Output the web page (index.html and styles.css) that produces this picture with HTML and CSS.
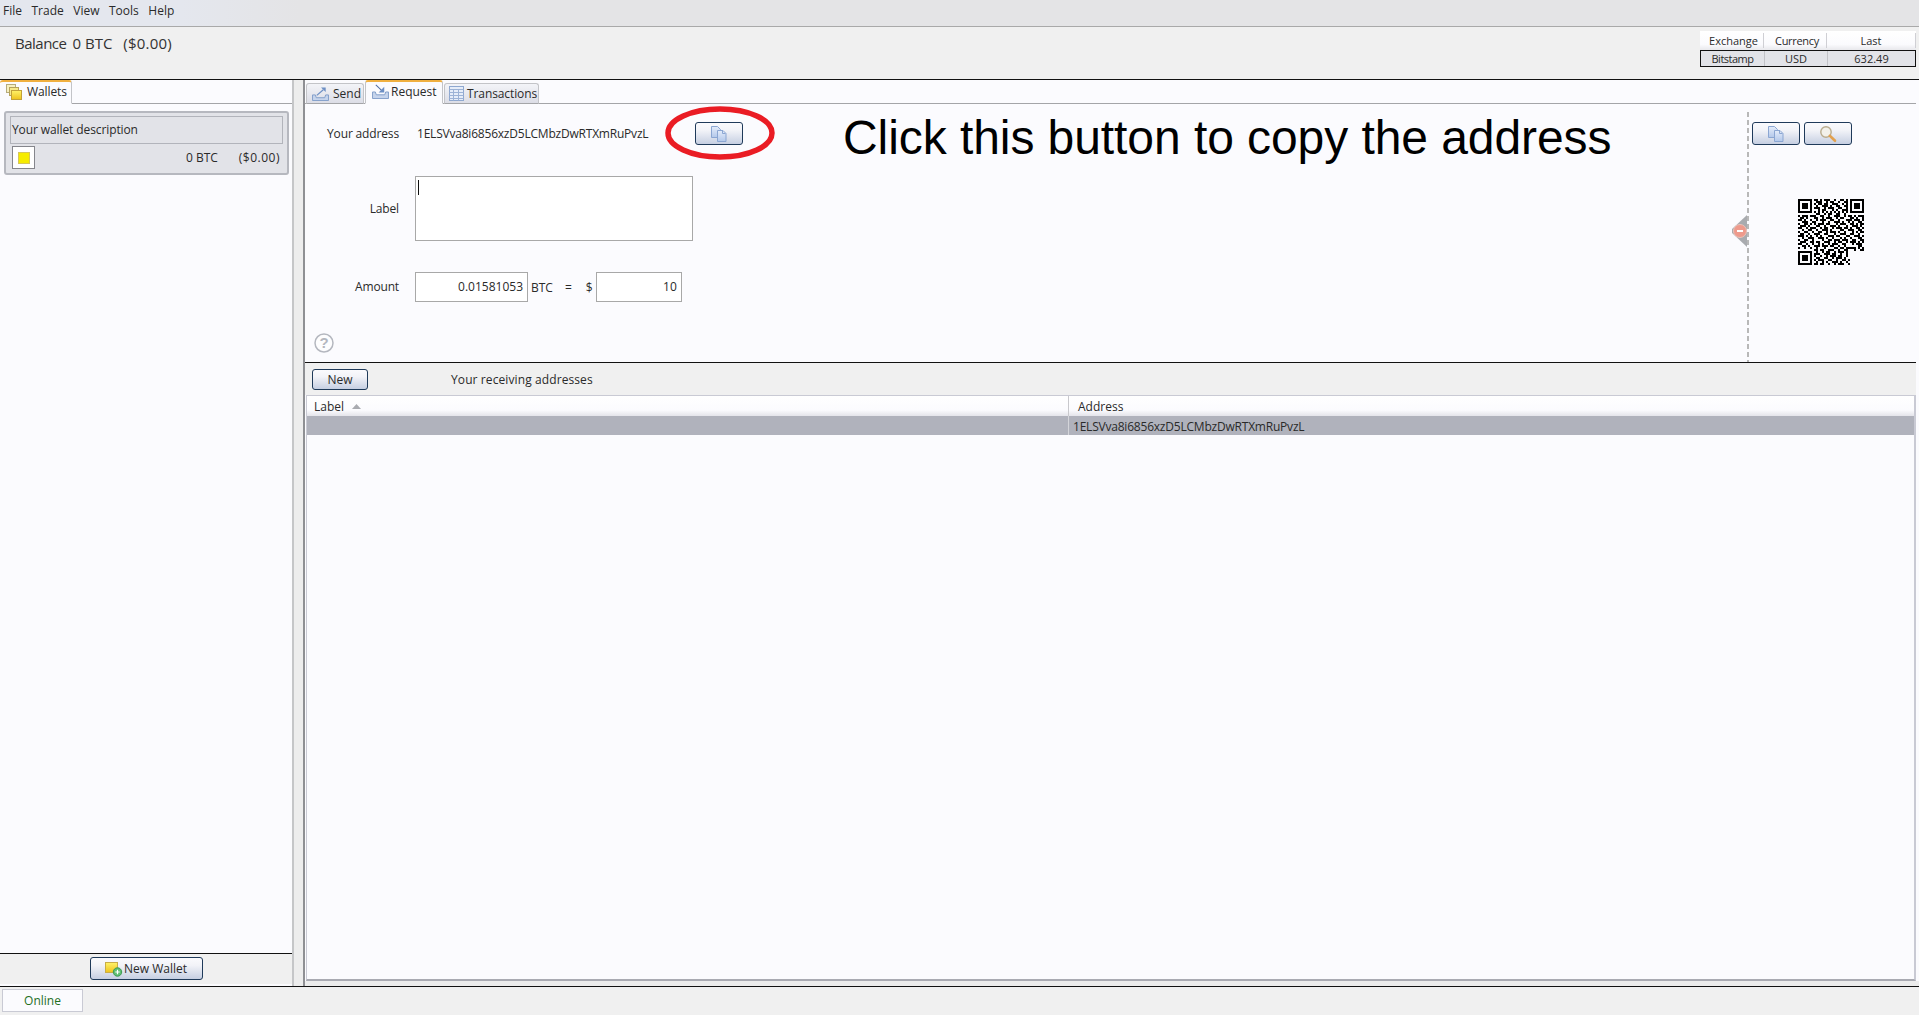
FILE: index.html
```html
<!DOCTYPE html>
<html lang="en">
<head>
<meta charset="utf-8">
<title>MultiBit</title>
<link rel="stylesheet" href="styles.css">
</head>
<body>
<svg class="defs" width="0" height="0" aria-hidden="true">
  <defs>
    <linearGradient id="docg" x1="0" y1="0" x2="0" y2="1"><stop offset="0" stop-color="#e4ecfa"/><stop offset="1" stop-color="#b3c8ea"/></linearGradient>
    <linearGradient id="yel" x1="0" y1="0" x2="0" y2="1"><stop offset="0" stop-color="#fff36a"/><stop offset="1" stop-color="#eec21c"/></linearGradient>
    <symbol id="i-copy" viewBox="0 0 18 18">
      <path d="M1.5 1.5h6l3 3v8h-9z" fill="url(#docg)" stroke="#8ba6d2"/>
      <path d="M7.5 5.5h5.500l3 3v8h-8.500z" fill="url(#docg)" stroke="#8ba6d2"/>
      <path d="M12.500 5.500v3h3" fill="none" stroke="#8ba6d2"/>
    </symbol>
    <symbol id="i-search" viewBox="0 0 18 18">
      <circle cx="7" cy="7" r="5.200" fill="#f3f1ea" stroke="#b9ac8e" stroke-width="1.400"/>
      <path d="M10.800 10.800l5.200 5" stroke="#e2a14f" stroke-width="2.600" stroke-linecap="round"/>
    </symbol>
    <symbol id="i-send" viewBox="0 0 18 16">
      <path d="M.5 9.500h3l1 3h9l1-3h3v6h-17z" fill="#c6d4ec" stroke="#7f9cc9"/>
      <path d="M5 10l7-6" stroke="#6d8fc4" stroke-width="1.300" fill="none"/>
      <path d="M9.500 1.500h5v5z" fill="#6d8fc4"/>
    </symbol>
    <symbol id="i-request" viewBox="0 0 18 16">
      <path d="M.5 8.500h3l1 3h9l1-3h3v7h-17z" fill="#c6d4ec" stroke="#7f9cc9"/>
      <path d="M4 1l7 6.500" stroke="#4f6da3" stroke-width="1.100" fill="none"/>
      <path d="M13 3v6h-6z" fill="#6d8fc4"/>
    </symbol>
    <symbol id="i-table" viewBox="0 0 15 15">
      <rect x=".5" y=".5" width="14" height="14" fill="#e6edf9" stroke="#8fa8d0"/>
      <path d="M.5 3.500h14M.5 6.500h14M.5 9.500h14M.5 12.500h14M4.500 3.500v11M9.500 3.500v11" stroke="#9db3d6" fill="none"/>
    </symbol>
    <symbol id="i-wallets" viewBox="0 0 16 16">
      <rect x=".5" y=".5" width="9" height="8" fill="#f6f0c0" stroke="#b6ab7c"/>
      <rect x="3.500" y="3.500" width="9" height="8" fill="#f7e98a" stroke="#b6a35c"/>
      <rect x="5.500" y="6.500" width="10" height="9" fill="url(#yel)" stroke="#c2a23a"/>
    </symbol>
    <symbol id="i-newwallet" viewBox="0 0 18 16">
      <rect x=".5" y="1.500" width="12" height="10" fill="url(#yel)" stroke="#c9ad47"/>
      <circle cx="12.500" cy="11" r="4.200" fill="#5fbf72" stroke="#3c9a52"/>
      <path d="M10.300 11h4.400M12.500 8.800v4.400" stroke="#fff" stroke-width="1.200"/>
    </symbol>
  </defs>
</svg>

<nav class="menubar">
  <span class="menu-item">File</span>
  <span class="menu-item">Trade</span>
  <span class="menu-item">View</span>
  <span class="menu-item">Tools</span>
  <span class="menu-item">Help</span>
</nav>

<header class="header">
  <div class="balance"><span class="balance-label">Balance</span><span>0 BTC</span><span class="balance-fiat">($0.00)</span></div>
  <div class="ticker">
    <div class="ticker-head"><span class="c1">Exchange</span><span class="c2">Currency</span><span class="c3">Last</span></div>
    <div class="ticker-row"><span class="c1">Bitstamp</span><span class="c2">USD</span><span class="c3">632.49</span></div>
  </div>
</header>

<main class="main">
  <aside class="left">
    <div class="tabstrip left-strip">
      <div class="tab active wallets-tab"><svg class="ico16"><use href="#i-wallets"/></svg><span>Wallets</span></div>
    </div>
    <div class="left-body">
      <div class="wallet-card">
        <div class="wallet-desc">Your wallet description</div>
        <div class="wallet-line">
          <div class="wallet-swatch"><i></i></div>
          <span class="wallet-btc">0 BTC</span>
          <span class="wallet-fiat">($0.00)</span>
        </div>
      </div>
    </div>
    <div class="left-foot">
      <button class="btn new-wallet"><svg class="ico-nw"><use href="#i-newwallet"/></svg>New Wallet</button>
    </div>
  </aside>

  <div class="splitter"></div>

  <section class="right">
    <div class="tabstrip right-strip">
      <div class="tab send-tab"><svg class="ico-tray"><use href="#i-send"/></svg><span>Send</span></div>
      <div class="tab active request-tab"><svg class="ico-tray"><use href="#i-request"/></svg><span>Request</span></div>
      <div class="tab tx-tab"><svg class="ico-table"><use href="#i-table"/></svg><span>Transactions</span></div>
    </div>

    <div class="request-top">
      <div class="form">
        <label class="form-label">Your address</label>
        <div class="address-row">
          <span class="address">1ELSVva8i6856xzD5LCMbzDwRTXmRuPvzL</span>
          <button class="btn icon-btn copy-btn"><svg class="ico18"><use href="#i-copy"/></svg></button>
        </div>
        <label class="form-label">Label</label>
        <div class="textarea"><i class="caret"></i></div>
        <label class="form-label amount-label">Amount</label>
        <div class="amount-row">
          <div class="input btc-input">0.01581053</div>
          <span class="unit">BTC</span>
          <span class="eq">=</span>
          <span class="dollar">$</span>
          <div class="input usd-input">10</div>
        </div>
        <div class="help-cell">
          <svg class="help" viewBox="0 0 20 20"><circle cx="10" cy="10" r="9" fill="#fdfdfe" stroke="#b4b7bf" stroke-width="1.500"/><text x="10" y="15" text-anchor="middle" class="help-q">?</text></svg>
        </div>
      </div>
      <div class="qr-side">
        <svg class="pull" viewBox="0 0 16 32"><path d="M16 0v32L1 18v-4z" fill="#a9abaf"/><circle cx="9" cy="16" r="6.500" fill="#ee9a8c" stroke="#e9c3bb"/><path d="M6 16h6" stroke="#fff" stroke-width="2"/></svg>
        <div class="qr-buttons">
          <button class="btn icon-btn"><svg class="ico18"><use href="#i-copy"/></svg></button>
          <button class="btn icon-btn"><svg class="ico18"><use href="#i-search"/></svg></button>
        </div>
        <svg class="qr" viewBox="0 0 33 33" shape-rendering="crispEdges">
          <path fill-rule="evenodd" d="M0 0h7v7h-7zM1 1v5h5v-5zM2 2h3v3h-3zM26 0h7v7h-7zM27 1v5h5v-5zM28 2h3v3h-3zM0 26h7v7h-7zM1 27v5h5v-5zM2 28h3v3h-3z"/>
          <path class="qr-runs" d="M8 .5h2M11 .5h1M13 .5h3M18 .5h1M21 .5h2M24 .5h1M9 1.500h3M14 1.500h1M16 1.500h2M20 1.500h1M23 1.500h2M8 2.500h1M10 2.500h2M13 2.500h2M17 2.500h3M22 2.500h1M24 2.500h1M9 3.500h1M12 3.500h3M16 3.500h1M19 3.500h2M23 3.500h2M8 4.500h3M13 4.500h1M15 4.500h3M20 4.500h2M24 4.500h1M10 5.500h1M12 5.500h2M17 5.500h1M19 5.500h1M22 5.500h3M8 6.500h1M10 6.500h1M12 6.500h1M14 6.500h1M16 6.500h1M18 6.500h1M20 6.500h1M22 6.500h1M24 6.500h1M9 7.500h2M13 7.500h1M15 7.500h2M19 7.500h2M23 7.500h1M0 8.500h1M2 8.500h3M6 8.500h3M11 8.500h2M15 8.500h1M18 8.500h3M23 8.500h1M25 8.500h2M28 8.500h1M30 8.500h3M1 9.500h2M4 9.500h1M8 9.500h2M12 9.500h1M14 9.500h3M19 9.500h1M21 9.500h2M26 9.500h2M29 9.500h1M32 9.500h1M0 10.500h2M3 10.500h1M6 10.500h1M9 10.500h1M11 10.500h3M16 10.500h2M20 10.500h1M24 10.500h3M28 10.500h3M32 10.500h1M2 11.500h3M7 11.500h2M12 11.500h1M15 11.500h1M18 11.500h3M22 11.500h1M25 11.500h1M27 11.500h1M30 11.500h2M0 12.500h1M3 12.500h2M6 12.500h1M8 12.500h1M10 12.500h3M14 12.500h2M19 12.500h1M21 12.500h3M26 12.500h2M29 12.500h1M31 12.500h2M1 13.500h3M5 13.500h1M9 13.500h2M13 13.500h1M16 13.500h3M20 13.500h1M24 13.500h1M27 13.500h3M31 13.500h1M0 14.500h2M4 14.500h1M6 14.500h3M11 14.500h1M13 14.500h2M17 14.500h1M19 14.500h3M23 14.500h2M26 14.500h1M29 14.500h2M32 14.500h1M2 15.500h1M5 15.500h2M9 15.500h1M12 15.500h3M16 15.500h1M21 15.500h2M25 15.500h3M30 15.500h2M0 16.500h1M3 16.500h2M7 16.500h1M10 16.500h2M14 16.500h1M16 16.500h3M20 16.500h1M23 16.500h1M27 16.500h1M29 16.500h1M31 16.500h2M1 17.500h2M5 17.500h1M8 17.500h3M13 17.500h2M18 17.500h1M21 17.500h3M26 17.500h2M30 17.500h1M0 18.500h3M4 18.500h1M6 18.500h1M9 18.500h1M11 18.500h1M15 18.500h3M19 18.500h2M24 18.500h2M28 18.500h3M32 18.500h1M2 19.500h1M5 19.500h3M10 19.500h3M14 19.500h1M17 19.500h1M21 19.500h1M23 19.500h1M26 19.500h1M30 19.500h2M0 20.500h1M3 20.500h2M7 20.500h1M12 20.500h1M15 20.500h2M18 20.500h3M22 20.500h3M27 20.500h2M31 20.500h2M1 21.500h3M6 21.500h2M9 21.500h2M13 21.500h3M18 21.500h1M20 21.500h2M24 21.500h1M26 21.500h3M30 21.500h1M32 21.500h1M0 22.500h2M4 22.500h1M7 22.500h1M10 22.500h1M12 22.500h1M15 22.500h1M17 22.500h3M22 22.500h2M27 22.500h1M29 22.500h3M2 23.500h2M5 23.500h1M8 23.500h3M12 23.500h3M16 23.500h2M20 23.500h1M23 23.500h1M30 23.500h2M0 24.500h1M3 24.500h1M6 24.500h1M9 24.500h1M13 24.500h1M18 24.500h2M21 24.500h2M24 24.500h5M30 24.500h1M32 24.500h1M8 25.500h2M11 25.500h2M15 25.500h3M20 25.500h1M23 25.500h2M28 25.500h1M31 25.500h2M9 26.500h1M12 26.500h1M14 26.500h2M18 26.500h1M20 26.500h3M24 26.500h1M8 27.500h3M13 27.500h3M17 27.500h2M21 27.500h1M24 27.500h1M8 28.500h1M11 28.500h1M14 28.500h1M16 28.500h3M20 28.500h2M24 28.500h1M9 29.500h2M13 29.500h2M17 29.500h1M19 29.500h3M23 29.500h1M8 30.500h1M10 30.500h3M15 30.500h2M19 30.500h1M22 30.500h2M25 30.500h1M9 31.500h1M12 31.500h1M14 31.500h1M17 31.500h3M21 31.500h1M24 31.500h1M8 32.500h2M11 32.500h2M15 32.500h1M18 32.500h1M20 32.500h3M25 32.500h1"/>
        </svg>
      </div>
    </div>

    <div class="addr-toolbar">
      <button class="btn new-btn">New</button>
      <span class="addr-title">Your receiving addresses</span>
    </div>

    <div class="table">
      <div class="thead">
        <div class="th th-label">Label<svg class="sort" viewBox="0 0 9 5"><path d="M4.500 0L9 5H0z" fill="#a9abb0"/></svg></div>
        <div class="th th-addr">Address</div>
      </div>
      <div class="tr selected">
        <div class="td td-label"></div>
        <div class="td td-addr">1ELSVva8i6856xzD5LCMbzDwRTXmRuPvzL</div>
      </div>
    </div>
  </section>
</main>

<footer class="status"><div class="online">Online</div></footer>

<svg class="ring" viewBox="0 0 110 54"><ellipse cx="55" cy="27" rx="52" ry="24" fill="none" stroke="#ea1c24" stroke-width="5.500"/></svg>
<div class="callout">Click this button to copy the address</div>
</body>
</html>
```

FILE: styles.css
```css
* { box-sizing: border-box; }
html, body { margin: 0; padding: 0; }
body {
  position: relative;
  width: 1919px;
  height: 1015px;
  overflow: hidden;
  display: flex;
  flex-direction: column;
  background: #f0f0f0;
  color: #2a2a2a;
  font: 12px "Open Sans", "Noto Sans", sans-serif;
}
.defs { position: absolute; }
.tab svg { flex: none; }

.menubar {
  height: 27px;
  flex: none;
  display: flex;
  align-items: center;
  padding: 0 0 5px 3px;
  gap: 9.500px;
  background: linear-gradient(90deg, #e4e7ee 0, #e4e7ee 180px, #e4e4e6 300px);
  border-bottom: 1px solid #a9a9a9;
}

.header {
  height: 53px;
  flex: none;
  display: flex;
  justify-content: space-between;
  padding: 4px 3px 0 15px;
  background: #f0f0f0;
  border-bottom: 1px solid #111;
}
.balance { font-size: 15px; display: flex; gap: 6px; padding-top: 2px; line-height: 20px; color: #333; }
.balance-label { letter-spacing: -.5px; }
.balance-fiat { margin-left: 5px; letter-spacing: .2px; }
.ticker { width: 216px; font-size: 11px; }
.ticker-head, .ticker-row { display: flex; align-items: center; text-align: center; }
.ticker-head { height: 19px; background: linear-gradient(#fff, #fbfbfe 70%, #e8e8ec); }
.ticker-head span { border-right: 1px solid #cfcfd4; height: 15px; line-height: 15px; }
.ticker-head .c1, .ticker-head .c2 { padding-left: 4px; }
.ticker-head .c2 { letter-spacing: -.3px; }
.ticker-row { height: 17px; background: #e2e3e8; border: 1px solid #111; }
.ticker-row span { border-right: 1px solid #c2c3c8; line-height: 15px; }
.ticker-row span:last-child { border-right: 0; }
.ticker-row .c1 { letter-spacing: -.5px; }
.c1 { width: 64px; }
.c2 { width: 63px; }
.c3 { flex: 1; }

.main { flex: 1; min-height: 0; display: flex; border-bottom: 1px solid #111; }
.left { width: 294px; flex: none; display: flex; flex-direction: column; background: #fbfbfe; border-right: 2px solid #c5c6c8; }
.splitter { width: 11px; flex: none; background: #ededed; border-right: 2px solid #8f9094; }
.right { flex: 1; min-width: 0; display: flex; flex-direction: column; background: #fbfbfe; padding-right: 3px; border-bottom: 5px solid #ececec; }

.tabstrip { height: 24px; flex: none; display: flex; align-items: flex-end; background: #fbfbfe; border-bottom: 1px solid #a4a5a8; }
.tab {
  height: 21px;
  display: flex;
  align-items: center;
  gap: 3px;
  padding: 0 0 0 4px;
  margin-bottom: -1px;
  border: 1px solid #c3c4c8;
  border-bottom-color: #a4a5a8;
  border-radius: 3px 3px 0 0;
  background: linear-gradient(#f3f4f8, #dcdde6);
}
.tab.active {
  height: 24px;
  background: #fbfbfe;
  border-top: 2px solid #f0b040;
  border-bottom-color: #fbfbfe;
  padding-bottom: 2px;
}
.wallets-tab { width: 72px; padding-left: 6px; gap: 5px; border-left: 0; letter-spacing: -.1px; }
.right-strip { padding-left: 1px; gap: 1px; }
.send-tab { width: 58px; padding-left: 5px; gap: 4px; }
.request-tab { width: 78px; padding-left: 6px; gap: 2px; }
.tx-tab { width: 95px; padding-left: 4px; gap: 3px; letter-spacing: -.1px; }
.ico16 { width: 16px; height: 16px; }
.ico-tray { width: 17px; height: 15px; }
.ico-table { width: 15px; height: 15px; }
.ico18 { width: 18px; height: 18px; display: block; margin: 0 auto; }
.ico-nw { width: 18px; height: 16px; margin-right: 1px; vertical-align: -4px; }

.left-body { flex: 1; padding: 7px 3px 7px 4px; }
.wallet-card {
  height: 64px;
  padding: 3px 4px;
  background: #e2e3e8;
  border: 2px solid #b6b8bf;
  border-radius: 3px;
}
.wallet-desc { height: 28px; padding-left: 1px; line-height: 26px; border: 1px solid #b2b4bb; letter-spacing: -.1px; }
.wallet-line { display: flex; align-items: center; height: 25px; padding: 2px 3px 0 2px; }
.wallet-swatch { width: 23px; height: 23px; display: flex; align-items: center; justify-content: center; background: #fff; border: 1px solid #85868c; }
.wallet-swatch i { width: 12px; height: 12px; background: #f6ec00; border: 1px solid #d6c65a; }
.wallet-btc { margin-left: auto; }
.wallet-fiat { margin-left: 21px; letter-spacing: .5px; }
.left-foot { height: 31px; flex: none; display: flex; justify-content: center; padding-top: 3px; margin-bottom: 2px; background: #f0f0f0; border-top: 1px solid #111; }

.btn {
  font: inherit;
  color: inherit;
  height: 23px;
  padding: 0;
  border: 1px solid #1f3a5a;
  border-radius: 3px;
  background: linear-gradient(#fafafd, #f2f3f8 35%, #c6cfe2);
}
.new-wallet { width: 113px; }
.icon-btn { width: 48px; }
.new-btn { width: 56px; }

.request-top { height: 259px; flex: none; display: flex; border-bottom: 1px solid #111; }
.form {
  flex: 1;
  display: grid;
  grid-template-columns: 94px 1fr;
  grid-template-rows: 23px 65px 30px 20px;
  row-gap: 31px;
  column-gap: 16px;
  padding-top: 18px;
}
.form-label { display: flex; align-items: center; justify-content: flex-end; letter-spacing: -.15px; }
.amount-label { padding-bottom: 1px; }
.address-row { display: flex; align-items: center; padding-left: 2px; }
.address { width: 278px; letter-spacing: -.21px; }
.textarea { width: 278px; padding: 3px 2px; background: #fff; border: 1px solid #a8a8a8; }
.caret { display: block; width: 1px; height: 15px; background: #111; }
.amount-row { display: flex; align-items: center; }
.input { height: 30px; line-height: 28px; text-align: right; padding-right: 4px; background: #fff; border: 1px solid #a8a8a8; }
.btc-input { width: 113px; }
.usd-input { width: 86px; }
.unit { margin-left: 3px; }
.eq { margin-left: 12px; }
.dollar { margin-left: 14px; width: 10px; }
.help-cell { grid-column: 1 / 3; padding-left: 9px; }
.help { width: 20px; height: 20px; display: block; }
.help-q { font: bold 15px "Liberation Sans", sans-serif; fill: #b4b7bf; }

.qr-side {
  position: relative;
  width: 169px;
  flex: none;
  padding: 18px 0 0 5px;
  background-image: repeating-linear-gradient(#b8b8b8 0 5px, transparent 5px 8px);
  background-size: 2px 100%;
  background-repeat: no-repeat;
  background-position: 0 8px;
}
.qr-buttons { display: flex; gap: 4px; }
.qr { width: 66px; height: 66px; display: block; margin: 54px 0 0 46px; }
.qr-runs { stroke: #000; stroke-width: 1; fill: none; }
.pull { position: absolute; left: -16px; top: 111px; width: 16px; height: 32px; }

.addr-toolbar { height: 32px; flex: none; display: flex; align-items: center; padding-left: 7px; background: #f0f0f0; }
.new-btn { height: 21px; }
.addr-title { margin-left: 83px; letter-spacing: .1px; }

.table { flex: 1; min-height: 0; margin-left: 1px; background: #fbfbfe; border: 1px solid #c9cad4; border-bottom: 2px solid #a9aab2; border-right-width: 2px; }
.thead, .tr { display: flex; }
.thead { height: 20px; background: linear-gradient(#fff, #fbfbfe 70%, #e4e4ea); }
.th { display: flex; align-items: center; padding-left: 7px; }
.th-label, .td-label { width: 762px; }
.th-label { border-right: 1px solid #c8c8cc; }
.th-addr { padding-left: 9px; }
.sort { width: 9px; height: 5px; margin-left: 8px; }
.tr { height: 19px; }
.selected { background: #b0b2bc; }
.td { line-height: 19px; padding-top: 1px; }
.td-label { border-right: 1px solid #d4d5da; }
.td-addr { padding-left: 4px; letter-spacing: -.21px; }

.status { height: 28px; flex: none; padding: 2px 0 0 2px; background: #f0f0f0; }
.online { width: 81px; height: 23px; line-height: 21px; text-align: center; color: #1f6f1f; background: #fbfbfe; border: 1px solid #c9cad4; }

.ring { position: absolute; left: 665px; top: 106px; width: 110px; height: 54px; }
.callout { position: absolute; left: 843px; top: 108px; font: 48px/60px "Liberation Sans", sans-serif; letter-spacing: -.07px; color: #000; white-space: nowrap; }
```
